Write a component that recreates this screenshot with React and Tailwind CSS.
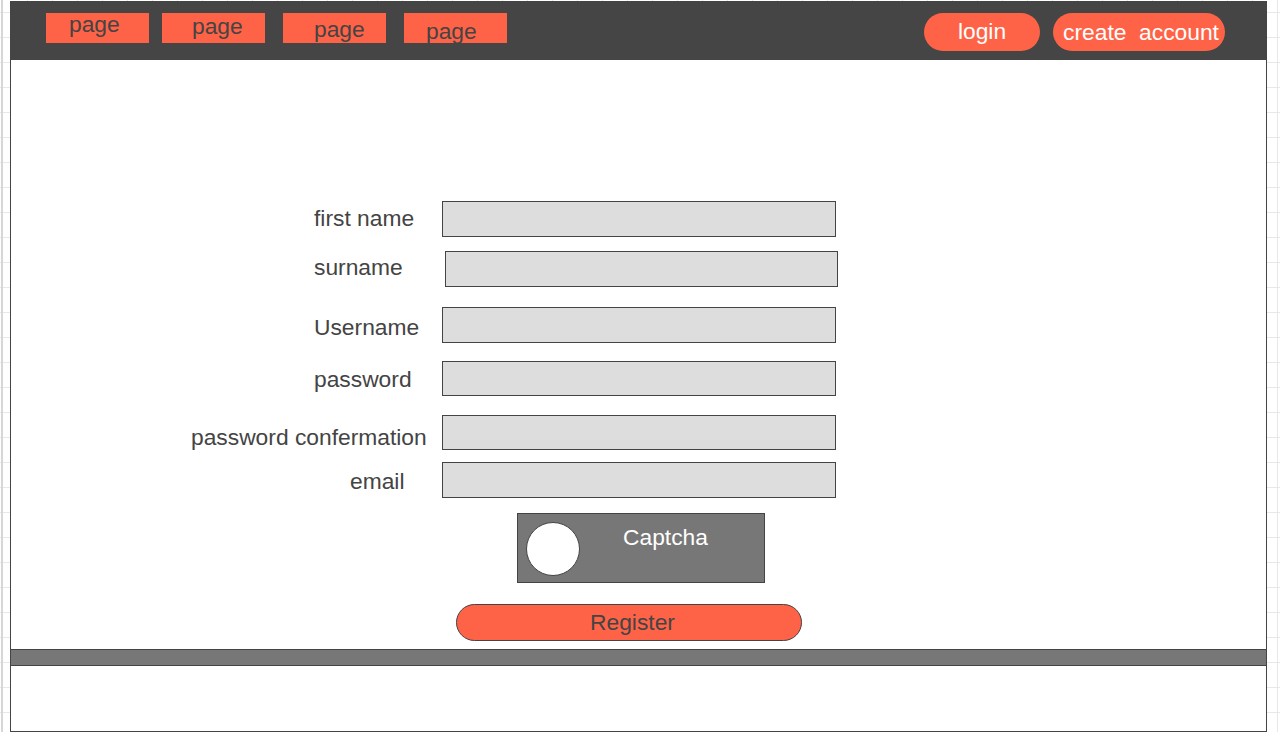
import React from "react";

const font = "font-['Liberation_Sans',Arial,Helvetica,sans-serif]";

export default function App() {
  return (
    <div
      className={`${font} w-full h-[732px] overflow-hidden bg-white bg-[image:linear-gradient(to_right,#e8e8e8_1px,transparent_1px),linear-gradient(to_bottom,#e8e8e8_1px,transparent_1px)] bg-[length:25px_25px] bg-[position:2px_12px] flex`}
    >
      <div className="w-[2px] h-full bg-[#d6d6d6] ml-[1px]" />
      <div className="ml-[7px] mt-[1px] w-[1257px] h-[731px] border border-[#444444] bg-white flex flex-col box-border">
        {/* Header */}
        <div className="h-[58px] bg-[#454545] flex items-start pt-[11px] shrink-0">
          <div className="flex ml-[35px]">
            <div className="w-[103px] h-[30px] bg-[#ff6347] text-[#444444] text-[22.8px] leading-[26px] pl-[23px] whitespace-nowrap">
              <div className="-mt-[2px]">page</div>
            </div>
            <div className="ml-[13px] w-[103px] h-[30px] bg-[#ff6347] text-[#444444] text-[22.8px] leading-[26px] pl-[30px] whitespace-nowrap">
              <div className="mt-[0px]">page</div>
            </div>
            <div className="ml-[18px] w-[103px] h-[30px] bg-[#ff6347] text-[#444444] text-[22.8px] leading-[26px] pl-[31px] whitespace-nowrap">
              <div className="mt-[3px]">page</div>
            </div>
            <div className="ml-[18px] w-[103px] h-[30px] bg-[#ff6347] text-[#444444] text-[22.8px] leading-[26px] pl-[22px] whitespace-nowrap">
              <div className="mt-[5px]">page</div>
            </div>
          </div>
          <div className="ml-auto mr-[41px] flex">
            <div className="w-[116px] h-[38px] rounded-full bg-[#ff6347] text-white text-[22.8px] leading-[26px] flex items-center justify-center pb-[2px]">
              login
            </div>
            <div className="ml-[13px] w-[172px] h-[38px] rounded-full bg-[#ff6347] text-white text-[22.8px] leading-[26px] flex items-center justify-center whitespace-pre pl-[4px]">
              {"create  account"}
            </div>
          </div>
        </div>

        {/* Main form */}
        <div className="h-[589px] shrink-0 flex flex-col items-start pt-[141px] text-[22.8px] leading-[26px] text-[#444444]">
          <div className="flex items-start">
            <div className="w-[431px] pl-[303px] mt-[4px] whitespace-nowrap">first name</div>
            <div className="w-[394px] h-[36px] border border-[#444444] bg-[#dddddd]" />
          </div>
          <div className="flex items-start mt-[14px]">
            <div className="w-[434px] pl-[303px] mt-[3px] whitespace-nowrap">surname</div>
            <div className="w-[393px] h-[36px] border border-[#444444] bg-[#dddddd]" />
          </div>
          <div className="flex items-start mt-[20px]">
            <div className="w-[431px] pl-[303px] mt-[7px] whitespace-nowrap">Username</div>
            <div className="w-[394px] h-[36px] border border-[#444444] bg-[#dddddd]" />
          </div>
          <div className="flex items-start mt-[18px]">
            <div className="w-[431px] pl-[303px] mt-[5px] whitespace-nowrap">password</div>
            <div className="w-[394px] h-[35px] border border-[#444444] bg-[#dddddd]" />
          </div>
          <div className="flex items-start mt-[19px]">
            <div className="w-[431px] pl-[180px] mt-[9px] whitespace-nowrap">password confermation</div>
            <div className="w-[394px] h-[35px] border border-[#444444] bg-[#dddddd]" />
          </div>
          <div className="flex items-start mt-[12px]">
            <div className="w-[431px] pl-[339px] mt-[6px] whitespace-nowrap">email</div>
            <div className="w-[394px] h-[36px] border border-[#444444] bg-[#dddddd]" />
          </div>

          {/* Captcha */}
          <div className="mt-[15px] ml-[506px] w-[248px] h-[70px] border border-[#444444] bg-[#777777] flex items-start">
            <div className="ml-[8px] mt-[8px] w-[54px] h-[54px] rounded-full bg-white border border-[#444444] shrink-0" />
            <div className="ml-[43px] mt-[10px] text-white">Captcha</div>
          </div>

          {/* Register */}
          <div className="mt-[21px] ml-[445px] w-[346px] h-[37px] rounded-full border border-[#444444] bg-[#ff6347] flex justify-center items-start pt-[4px] pl-[7px]">
            Register
          </div>
        </div>

        {/* Footer bar */}
        <div className="h-[17px] shrink-0 border-y border-[#444444] bg-[#777777]" />
        <div className="flex-1 bg-white" />
      </div>
    </div>
  );
}
